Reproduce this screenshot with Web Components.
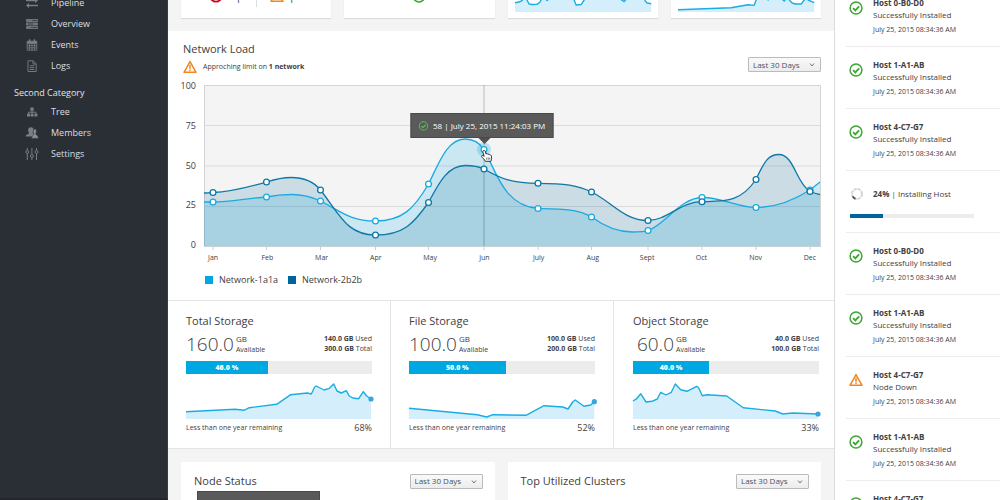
<!DOCTYPE html>
<html lang="en">
<head>
<meta charset="utf-8">
<title>Network dashboard</title>
<style>
  html, body { margin: 0; height: 100%; }
  body { font-family: "Open Sans", "Noto Sans", sans-serif; color: #414042; overflow: hidden; }
</style>
</head>
<body>
<dash-shell>
  <side-nav slot="nav">
    <nav-item icon="pipeline">Pipeline</nav-item>
    <nav-item icon="overview">Overview</nav-item>
    <nav-item icon="events">Events</nav-item>
    <nav-item icon="logs">Logs</nav-item>
    <nav-heading>Second Category</nav-heading>
    <nav-item icon="tree">Tree</nav-item>
    <nav-item icon="members">Members</nav-item>
    <nav-item icon="settings">Settings</nav-item>
  </side-nav>

  <card-strip class="top" columns="4">
    <summary-card>
      <count-pair errors="1" warnings="1"></count-pair>
    </summary-card>
    <summary-card><ui-icon name="ok" class="big"></ui-icon></summary-card>
    <summary-card><spark-line width="136" height="32" points="0,22.7 4,22 7,20.5 10,16 13,22 14,24 17,24.5 22,24.3 25,22 27,18 30,18 32,20.5 35,18 55,16 59,20 61,25 66,24.5 69,20 72,12 100,10 105,19 109,21.5 112,18 120,8 128,14 130,21 132,23 136,23.7"></spark-line></summary-card>
    <summary-card><spark-line width="136" height="32" points="0,29.7 53,27.7 70,24.7 76,25.3 78,20 82,8 88,18 90,20 93,15 102,17 106,21 109,17 112,21 114,23 117,24 123,24 126,20 128,16 130,20 136,22.7"></spark-line></summary-card>
  </card-strip>

  <network-panel></network-panel>

  <storage-row>
    <storage-card name="Total Storage" free="160.0" used="140.0 GB" total="300.0 GB" percent="46.0" fill="44" left="68%"
      points="0,32.7 49,30.3 58,31.3 63.3,28.7 90.7,25.3 104.7,15.7 121.3,14 125.3,15 128.7,8 130.3,7 138,11 143.3,9.3 147.7,5 151,12 155.3,14 160.3,11.7 163.3,17 166.7,19 172.7,19.7 177.3,12.7 180.7,17 185,20"></storage-card>
    <storage-card name="File Storage" free="100.0" used="100.0 GB" total="200.0 GB" percent="50.0" fill="52" left="52%"
      points="0,29.3 68.3,35.7 77.7,38 83.7,35.7 117,36.3 135,26.7 153.7,28 159,30 163.7,23 166.3,21 175,27.3 181.7,26 185.3,22.7"></storage-card>
    <storage-card name="Object Storage" free="60.0" used="40.0 GB" total="100.0 GB" percent="40.0" fill="41" left="33%"
      points="0,22 3.7,19.7 7.7,14.7 13,23 19,22.3 24.3,20 27.7,13.3 33,16 38.3,13.3 42.3,5 47.7,10.7 54,12.3 63.7,7.3 65.7,9 69.3,16.7 74.3,15.7 93.7,17 110.3,28.7 142.3,32 149.7,35 159.7,34 185,35"></storage-card>
  </storage-row>

  <card-strip columns="2">
    <status-card name="Node Status"><dark-tip>full report</dark-tip></status-card>
    <status-card name="Top Utilized Clusters"></status-card>
  </card-strip>

  <host-feed slot="feed">
    <host-event state="ok" host="Host 0-B0-D0">Successfully Installed</host-event>
    <host-event state="ok" host="Host 1-A1-AB">Successfully Installed</host-event>
    <host-event state="ok" host="Host 4-C7-G7">Successfully Installed</host-event>
    <host-progress percent="24">Installing Host</host-progress>
    <host-event state="ok" host="Host 0-B0-D0">Successfully Installed</host-event>
    <host-event state="ok" host="Host 1-A1-AB">Successfully Installed</host-event>
    <host-event state="warn" host="Host 4-C7-G7">Node Down</host-event>
    <host-event state="ok" host="Host 1-A1-AB">Successfully Installed</host-event>
    <host-event state="ok" host="Host 4-C7-G7">Successfully Installed</host-event>
  </host-feed>
</dash-shell>

<script>
const define = (tag, render) => customElements.define(tag, class extends HTMLElement {
  connectedCallback() {
    if (this.shadowRoot) return;
    this.attachShadow({ mode: 'open' }).innerHTML = render(name => this.getAttribute(name) || '');
  }
});

const ICONS = {
  ok: ['0 0 14 14', '<g fill="none" style="stroke:var(--ok,#3fa535)"><circle cx="7" cy="7" r="5.900" stroke-width="1.500"/><path d="M4.100 7.100l2.200 2.200 3.800-4" stroke-width="1.900"/></g>'],
  error: ['0 0 14 14', '<circle cx="7" cy="7" r="5.700" fill="none" stroke="#d0021b" stroke-width="1.800"/>'],
  warn: ['0 0 14 14', '<path d="M7 1.600L13 12.300H1z" fill="none" stroke="#f0861d" stroke-width="1.500" stroke-linejoin="round"/><path d="M7 4.800v3.900M7 9.400v1.600" stroke="#f0861d" stroke-width="1.500"/>'],
  spinner: ['0 0 14 14', '<circle cx="7" cy="7" r="5" fill="none" stroke="#d3d5d5" stroke-width="2" stroke-dasharray="3.100 .83"/><path d="M2.700 9.400a5 5 0 0 0 2.800 2.400" fill="none" stroke="#4d5258" stroke-width="2"/>'],
  pipeline: ['0 0 14 14', '<path d="M1 4.500h9M4 9.500h9" stroke="#7b7e83" stroke-width="1.500"/><path d="M10 2l3 2.500-3 2.500zM4 7v5L1 9.500z" fill="#7b7e83"/>'],
  overview: ['0 0 14 14', '<path d="M1.500 2.500h11v2h-11zM1.500 6h11v2h-11zM1.500 9.500h11v2h-11z" fill="#6b6e74" stroke="#7b7e83" stroke-width=".8"/><path d="M7 3.500h5M3 7h5M6 10.500h6" stroke="#34383f" stroke-width=".8"/>'],
  events: ['0 0 14 14', '<path d="M2.200 3.200h9.600v9H2.200zM2.200 5.500h9.600M2.200 7.700h9.600M2.200 9.900h9.600M4.600 5v7M7 5v7M9.400 5v7" fill="none" stroke="#74777d" stroke-width=".9"/><path d="M2.200 3.200h9.600v2H2.200zM4 1.200h1.200v2H4zM8.800 1.200H10v2H8.800z" fill="#7b7e83"/>'],
  logs: ['0 0 14 14', '<path d="M3 1.800h5.200l3 3v7.700H3zM8 1.800v3.200h3.200M4.800 6.800h4.500M4.800 8.700h4.500M4.800 10.500h4.500" fill="none" stroke="#74777d"/>'],
  tree: ['0 0 14 14', '<path d="M5.300 2.500h3.400v3.200H5.300zM2 8.800h3v2.700H2zM5.600 8.800h3v2.700h-3zM9.400 8.800h3v2.700h-3z" fill="#7b7e83"/><path d="M7 5.500v3.500M3.500 9V7.200h7.400V9" fill="none" stroke="#7b7e83"/>'],
  members: ['0 0 14 14', '<path d="M6 1.200c2 0 2.700 1.400 2.500 3-.1 1.400-.7 2-.9 2.900.6 1 2.900 1.300 3.100 3.400H.6c.1-2.200 2.700-2.200 3.400-3.300-.2-1-.8-1.500-.9-3C3 2.600 4 1.200 6 1.200z" fill="#7b7e83"/><path d="M9.300 2.800c1.700 0 2.300 1.200 2.100 2.600-.1 1.100-.6 1.600-.7 2.400.5 1.200 2.600 1.600 2.900 4.600H6.500c.1-2.600 1.900-3 2.500-4-.2-.8-.9-1.600-.9-2.900z" fill="#8a8d91" stroke="#2a2e35" stroke-width=".5"/>'],
  settings: ['0 0 14 14', '<path d="M2.300 1v2.500M2.300 6.500V13M6.900 1v6.500M6.900 10.500V13M11.500 1v2.500M11.500 6.500V13" stroke="#7b7e83"/><g fill="none" stroke="#7b7e83"><circle cx="2.300" cy="5" r="1.500"/><circle cx="6.900" cy="9" r="1.500"/><circle cx="11.500" cy="5" r="1.500"/></g>']
};

define('ui-icon', a => {
  const [box, art] = ICONS[a('name')];
  return `<style>:host{display:block;width:14px;height:14px;flex:none}svg{display:block;width:100%;height:100%}</style>
    <svg viewBox="${box}" aria-hidden="true">${art}</svg>`;
});

define('dash-shell', () => `<style>
  :host{display:grid;grid-template-columns:168px minmax(0,1fr) 166px;height:100vh;overflow:hidden;background:#f4f4f4}
  nav{background:#2a2e35;border-right:1px solid #3a3d44;border-bottom:2px solid #22252b;overflow:hidden}
  main{overflow:hidden}
  main>div{margin-top:-30px}
  aside{background:#fff;border-left:1px solid #dcdcdc;overflow:hidden}
</style>
<nav><slot name="nav"></slot></nav><main><div><slot></slot></div></main><aside><slot name="feed"></slot></aside>`);

define('side-nav', () => `<style>:host{display:block;margin-top:-8px}</style><slot></slot>`);
define('nav-item', a => `<style>
  :host{display:block}
  a{display:flex;align-items:center;gap:12px;padding-left:25px;height:21px;font-size:9px;font-weight:500;color:#dddfe1;text-decoration:none}
</style><a href="#"><ui-icon name="${a('icon')}"></ui-icon><slot></slot></a>`);
define('nav-heading', () => `<style>
  :host{display:block;padding:11px 0 2px 14px;font-size:9px;line-height:12px;font-weight:400;color:#e3e5e7}
</style><slot></slot>`);

define('card-strip', a => `<style>
  :host{display:grid;grid-template-columns:repeat(${a('columns')},minmax(0,1fr));gap:13px;padding:13px;background:#f4f4f4}
  :host(.top){padding-top:0}
</style><slot></slot>`);

define('summary-card', () => `<style>
  :host{display:block;box-sizing:border-box;height:48px;padding:10px 7px 6px;background:#fff;box-shadow:0 1px 1px #ddd}
  ::slotted(.big){margin:9px auto 0}
</style><slot></slot>`);

define('count-pair', a => `<style>
  :host{display:flex;height:27px;font-size:16px;line-height:16px}
  span{display:flex;flex:1;gap:3px;padding:9px 13px 0}
  span:first-of-type{justify-content:flex-end;gap:10px;border-right:1px solid #ddd}
  b{font-weight:300}
</style><span><ui-icon name="error"></ui-icon><b>${a('errors')}</b></span><span><ui-icon name="warn"></ui-icon><b>${a('warnings')}</b></span>`);

define('spark-line', a => {
  const w = a('width'), h = a('height'), pts = a('points').trim();
  const list = pts.split(' '), [fx] = list[0].split(','), [lx, ly] = list[list.length - 1].split(',');
  return `<style>:host{display:block}svg{display:block;width:100%;overflow:visible}</style>
  <svg viewBox="0 0 ${w} ${h}" aria-hidden="true"><polygon points="${fx},${h} ${pts} ${lx},${h}" fill="#d4effb"/>
  <polyline points="${pts}" fill="none" stroke="#1aade4" stroke-width="1.400" stroke-linejoin="round"/>
  ${a('dot') ? `<circle cx="${lx}" cy="${ly}" r="2.600" fill="#3aa5dc"/>` : ''}</svg>`;
});

define('range-select', () => `<style>
  :host{display:block;position:relative;width:73px;height:15px;flex:none}
  select{appearance:none;box-sizing:border-box;display:block;width:100%;height:15px;margin:0;padding:0 0 0 4px;border:1px solid #bbb;border-radius:1px;
    background:linear-gradient(#fafafa,#ececec);font:8px/12px "Open Sans","Noto Sans",sans-serif;font-weight:500;color:#4d5258}
  svg{position:absolute;right:6px;top:5px;width:6px;height:6px;pointer-events:none}
</style><select aria-label="Time range"><option>Last 30 Days</option><option>Last 60 Days</option></select>
<svg viewBox="0 0 6 6"><path d="M1 1.500l2 2.500 2-2.500" fill="none" stroke="#777"/></svg>`);

define('network-panel', () => {
  const months = ['Jan','Feb','Mar','Apr','May','Jun','July','Aug','Sept','Oct','Nov','Dec'];
  const xs = [9,62.5,116.5,171.5,224.5,280,334,387.5,444,498,552,606];
  const light = [117,112,116,136,99,64.5,123.5,132,145.5,112.5,122.5,105];
  const dark = [107.5,97,105,150,117.5,84,98.3,107,135.5,116.7,94.5,106.5];
  const lightPath = 'M0 117L9 117C26 117 45 113 62.500 112C72 110 80 109.500 88 109.500C101 109.500 108 112 116.500 116C136 126 146 136 171.500 136C198 136 210 124 224.500 99C235 78 243 54 261 54C268 54 275 57 280 64.500C292 86 300 121 334 123.500C360 124 374 124 387.500 132C400 141 415 147 428 147C435 147 440 147 444 145.500C461 140 476 113 498 112.500C517 112 535 123 552 122.500C574 122.500 595 112 606 105L616 97';
  const darkPath = 'M0 108C3 108 5 107.500 9 107.500C26 107 45 102 62.500 97C72 94 80 92.500 87 92.500C101 92.500 110 97 116.500 105C136 130 143 150 171.500 150C200 150 210 138 224.500 117.500C234 100 243 80.500 261 80.500C268 80.500 274 81 280 84C297 94 309 98.300 334 98.300C360 98.300 374 100 387.500 107C408 117 420 135.500 444 135.500C463 135.500 476 117 498 116.700C520 116 536 118 552 94.500C561 75 565 69.500 575 69.500C590 69.500 592 98 606 106.500C610 108 613 109 616 109.500';
  const dots = (ys, c) => xs.map((x, i) => `<circle cx="${x}" cy="${ys[i]}" r="2.900" fill="#fff" stroke="${c}" stroke-width="1.300"/>`).join('');
  return `<style>
  :host{display:block;background:#fff;padding:10px 13px 14px 12px}
  header{display:flex;align-items:flex-end;justify-content:space-between;padding:0 0 13px 3px}
  h2{margin:0;font-size:11px;line-height:16px;font-weight:400}
  .alert{display:flex;align-items:center;gap:6px;margin:3px 0 -2px;font-size:7px;line-height:14px}
  .alert p{margin:0}
  .chart{display:grid;grid-template-columns:24px minmax(0,1fr)}
  .axis{display:flex;flex-direction:column;justify-content:space-between;margin:-5px 0 -4px;padding-right:8px;text-align:right;font-size:9px;line-height:12px}
  .plot{position:relative}
  .plot>svg{display:block;width:100%;overflow:visible}
  .months{grid-column:2;display:grid;grid-template-columns:repeat(12,1fr);margin:5px -16px 0 -18px;text-align:center;font-size:7px;line-height:12px}
  .legend{display:flex;gap:10px;margin:10px 0 0 25px;font-size:9px;line-height:12px}
  .legend span{display:flex;align-items:center;gap:6px}
  .legend i{width:8px;height:8px;background:#00a8e1}
  .legend span+span i{background:#00659c}
  .tip{position:absolute;left:45%;top:28px;transform:translateX(-50%);box-sizing:border-box;width:143px;height:25px;display:flex;align-items:center;justify-content:center;gap:5px;white-space:nowrap;
    background:#5a5a5a;border:1px solid #4a4a4a;color:#fff;font-size:8px;font-weight:500;--ok:#4fc04f}
  .tip ui-icon{width:10px;height:10px}
  .tip::after{content:"";position:absolute;left:67px;top:24px;border:6px solid transparent;border-top-color:#505050;border-bottom:0}
</style>
<header><div><h2>Network Load</h2><div class="alert"><ui-icon name="warn"></ui-icon><p>Approching limit on <b>1 network</b></p></div></div><range-select></range-select></header>
<div class="chart">
  <div class="axis"><span>100</span><span>75</span><span>50</span><span>25</span><span>0</span></div>
  <div class="plot">
    <svg viewBox="0 0 617 162" role="img" aria-label="Network load by month">
      <rect width="617" height="162" fill="#f4f4f4"/>
      <path d="M0 40.500h617M0 81h617M0 121.500h617" stroke="#dadbdc"/>
      <path d="M.5 162V.5h616V162" fill="none" stroke="#d3d4d5"/>
      <path d="${lightPath}V162H0z" fill="#00a8e1" fill-opacity=".17"/>
      <path d="${darkPath}V162H0z" fill="#00659c" fill-opacity=".17"/>
      <path d="M280 0v162" stroke="#000" stroke-opacity=".16" stroke-width="1.500"/>
      <path d="M0 161.500h617M${xs.map(x => x + ' 162v3').join('M')}" stroke="#c4d2d8"/>
      <path d="${lightPath}" fill="none" stroke="#1aaae0" stroke-width="1.300"/>
      <path d="${darkPath}" fill="none" stroke="#0f78a6" stroke-width="1.300"/>
      <circle cx="280" cy="64.500" r="7" fill="#00a8e1" fill-opacity=".25"/>
      ${dots(light, '#1aaae0')}${dots(dark, '#0f78a6')}
      <path transform="translate(276.500 64.500)" d="M2.600 1.400C3 .5 4.400.6 4.700 1.600l.9 3c.6-.7 1.600-.4 1.900.3.700-.5 1.500-.1 1.800.5.800-.2 1.500.3 1.600 1.200l.2 2.500c0 1-.5 1.600-.7 2.700H4.900C4.200 9.900 2 8.700 1 6.800c.3-1.200 1.700-.9 2.700.1L2.500 2.900c-.1-.5-.1-1 .1-1.500z" fill="#fff" stroke="#222" stroke-width=".9"/>
      <path transform="translate(276.500 64.500)" d="M6.200 8v2.200M7.800 8v2.200M9.300 8v2.200" stroke="#222" stroke-width=".6"/>
    </svg>
    <div class="tip"><ui-icon name="ok"></ui-icon><span>58 | July 25, 2015 11:24:03 PM</span></div>
  </div>
  <div class="months">${months.map(m => `<span>${m}</span>`).join('')}</div>
</div>
<div class="legend"><span><i></i>Network-1a1a</span><span><i></i>Network-2b2b</span></div>`;
});

define('storage-row', () => `<style>
  :host{display:grid;grid-template-columns:223fr 223fr 220fr;background:#fff;border:solid #e4e4e4;border-width:1px 0}
  ::slotted(*){min-width:0}
</style><slot></slot>`);

define('storage-card', a => `<style>
  :host{display:block;padding:12px 18px 14px;border-right:1px solid #e4e4e4}
  :host(:last-child){padding:12px 15px 14px 19px;border-right:0}
  h3{margin:0;font-size:11px;line-height:16px;font-weight:400}
  .row{display:flex;align-items:center;font-size:7px;line-height:10px}
  .num{font-size:19px;line-height:30px;font-weight:300;margin-right:2px;min-width:41px;text-align:right}
  .unit{font-size:8px}
  .used{margin-left:auto;text-align:right}
  .bar{height:13px;margin:2px 0 5px;background:#ececec}
  .bar div{width:${a('fill')}%;height:13px;background:#00a8e1;color:#fff;text-align:center;font-size:7px;line-height:13px;font-weight:800}
  .foot{display:flex;align-items:center;justify-content:space-between;margin-top:3px;font-size:7px;line-height:12px}
  .foot b{font-size:9px;font-weight:400}
</style>
<h3>${a('name')}</h3>
<div class="row"><span class="num">${a('free')}</span><span><span class="unit">GB</span><br>Available</span><span class="used"><b>${a('used')}</b> Used<br><b>${a('total')}</b> Total</span></div>
<div class="bar"><div>${a('percent')} %</div></div>
<spark-line width="186" height="40" dot="1" points="${a('points')}"></spark-line>
<div class="foot"><span>Less than one year remaining</span><b>${a('left')}</b></div>`);

define('status-card', a => `<style>
  :host{display:block;min-height:160px;padding:10px 12px 0 13px;background:#fff}
  header{display:flex;justify-content:space-between;align-items:center}
  h2{margin:0;font-size:11px;line-height:18px;font-weight:400}
</style><header><h2>${a('name')}</h2><range-select></range-select></header><slot></slot>`);

define('dark-tip', () => `<style>
  :host{display:block;box-sizing:border-box;width:123px;height:25px;margin:1px 0 0 3px;padding:4px 0 0 52px;background:#5a5a5a;border:1px solid #4a4a4a;color:#ccc;font-size:8px;line-height:14px}
</style><slot></slot>`);

define('host-feed', () => `<style>:host{display:block;margin-top:-15px;padding-left:11px}</style><slot></slot>`);

define('host-event', a => `<style>
  :host{display:flex;gap:10px;padding:12px 0 10px 3px;border-bottom:1px solid #ececec;font-size:8px;line-height:12px}
  ui-icon{margin-top:4px}
  p{margin:0}
  time{display:block;margin-top:3px;font-size:7px}
</style><ui-icon name="${a('state')}"></ui-icon><p><b>${a('host')}</b><br><slot></slot><time>July 25, 2015 08:34:36 AM</time></p>`);

define('host-progress', a => `<style>
  :host{display:block;box-sizing:border-box;height:62px;padding:16px 26px 0 4px;border-bottom:1px solid #ececec;font-size:8px;line-height:14px}
  .row{display:flex;gap:9px}
  .bar{height:4px;margin-top:13px;background:#ececec}
  .bar div{width:27%;height:4px;background:#00659c}
</style><div class="row"><ui-icon name="spinner"></ui-icon><span><b>${a('percent')}%</b> | <slot></slot></span></div>
<div class="bar"><div></div></div>`);
</script>
</body>
</html>
